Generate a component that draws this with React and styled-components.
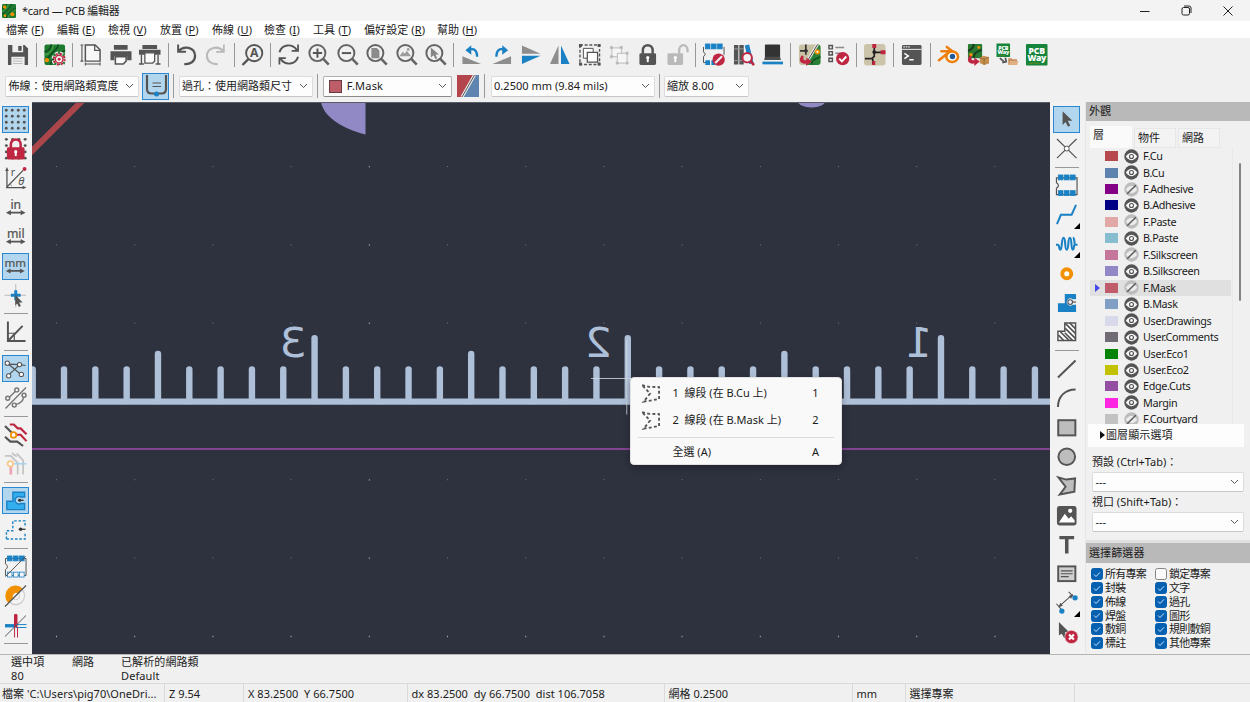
import React from "react";
import styled, { createGlobalStyle, css } from "styled-components";

const D = "#545454";
const B = "#1a81c4";
const R = "#bf2641";
const L = "#b9b9b9";
const O = "#f29100";

const Global = createGlobalStyle`
  * { box-sizing: border-box; }
  body {
    margin: 0;
    overflow: hidden;
    background: #f0f0f0;
    color: #1b1b1b;
    font-family: "Noto Sans", "Noto Sans CJK TC", sans-serif;
    font-size: 11px;
    line-height: 14px;
    letter-spacing: 0.1px;
    white-space: pre;
  }
`;

/* ---------- icon drawings, all on a 24 x 24 grid ---------- */

const lens = (c = "#646464") => (
  <>
    <circle cx="10.6" cy="10.3" r="8.2" fill="none" stroke={c} strokeWidth="2" />
    <path d="M16.6 16.3l5.6 5.8" stroke={c} strokeWidth="2.6" />
  </>
);
const padRow = (y, fill = B) =>
  [3.4, 9.6, 15.8].map((x) => (
    <rect key={x} x={x} y={y} width="4.8" height="5" fill={fill} stroke={B} strokeWidth="0.8" />
  ));
const hArrow = (y = 19) => (
  <path d={`M2 ${y}l5-2.6v1.7h10v-1.7l5 2.6l-5 2.6v-1.7h-10v1.7z`} fill={D} />
);
const unitLabel = (t, size = 12.5) => (
  <>
    <text x="12" y="13" textAnchor="middle" fontSize={size} fill={D} stroke={D} strokeWidth=".25" letterSpacing="0" fontFamily="Noto Sans">{t}</text>
    {hArrow(17)}
  </>
);
const dotGrid = (
  <g fill={D}>
    {[2.4, 8.8, 15.2, 21.6].flatMap((x) =>
      [2.4, 8.8, 15.2, 21.6].map((y) => <circle key={`${x}-${y}`} cx={x} cy={y} r="1.5" />)
    )}
  </g>
);
const board = (
  <>
    <rect x="1.5" y="1.5" width="21" height="21" rx="2" fill="#1d7a2f" />
    <path d="M1.5 9q6-1 7-7.5M1.500 17c5-1 6-5 9-8s5-3 5-7.500M8 22.500c0-7 4-5 6-9s5-3 8.500-6" fill="none" stroke="#0f4a20" strokeWidth="1.500" />
    <path d="M1.500 12.500c6-1 8-5 9.500-11M11 22c0-5 4-6 5-8s4-3 6.500-4" fill="none" stroke="#4fa548" strokeWidth="1.200" />
  </>
);
const pcbway = (x, y, s) => (
  <g transform={`translate(${x} ${y}) scale(${s})`}>
    <rect width="22" height="22" rx="1" fill="#16843a" />
    <text x="11" y="9.8" textAnchor="middle" fontSize="8.8" fontWeight="800" fill="#fff" letterSpacing="-0.2" fontFamily="Open Sans">PCB</text>
    <text x="11" y="17.8" textAnchor="middle" fontSize="8.8" fontWeight="800" fill="#fff" letterSpacing="-0.4" fontFamily="Open Sans">Way</text>
    <path d="M3 20.300q4-1.400 11-.6" stroke="#6a8a1f" fill="none" />
  </g>
);
const redHook = <path d="M4 12.500c-4.500 5 -1 9.500 4.500 8.500v2.500l5.500-4.700l-5.500-4v2.700c-2 .6-4-1-2.500-3.500z" fill={R} />;

const DRAWINGS = {
  save: (
    <>
      <path d="M2 2h17l3.500 3.500v17H2z" fill={D} />
      <path d="M6.500 2h11v7.500h-11zM5.500 14h13.500v8.500h-13.500z" fill="#f0f0f0" />
      <path d="M12.500 3h3.500v5h-3.500z" fill={D} />
      <path d="M7 16h10M7 18.500h10M7 21h10" stroke={L} strokeWidth="1" />
    </>
  ),
  boardSetup: (
    <>
      {board}
      <circle cx="4" cy="17.500" r="2.200" fill={O} />
      <circle cx="16.500" cy="16.500" r="6" fill="none" stroke="#e9e9e9" strokeWidth="3.600" strokeDasharray="3 1.712" />
      <circle cx="16.500" cy="16.500" r="5" fill="#e9e9e9" />
      <circle cx="16.500" cy="16.500" r="5.600" fill="none" stroke={R} strokeWidth="2" strokeDasharray="2.200 2.198" />
      <circle cx="16.500" cy="16.500" r="3.900" fill="#f3f3f3" stroke={R} strokeWidth="1.400" />
      <circle cx="16.500" cy="16.500" r="1.500" fill={R} />
    </>
  ),
  page: (
    <g fill="none" stroke={D}>
      <path d="M6.500 2h10l5 5v11.500h-15z" fill="#f7f7f7" strokeWidth="1.500" />
      <path d="M16 2v5.500h5.500" strokeWidth="1.300" />
      <path d="M3 2v16.500M1.500 2h3M1.500 18.500h3M6.500 21.500h15M6.500 20v3M21.500 20v3" strokeWidth="1.100" />
    </g>
  ),
  print: (
    <>
      <path d="M5 2h14v5H5zM1.500 8.500h21.500v9h-4.500v-4h-13v4H1.500z" fill={D} />
      <path d="M6.500 14v7.500h8l3-3V14z" fill="#fafafa" stroke={D} strokeWidth="1.600" />
    </>
  ),
  plot: (
    <>
      <path d="M1 7h22v5H1zM4.500 2h15v4h-15z" fill={D} />
      <path d="M7 10h10v8.500l-2 2H7z" fill="#fafafa" stroke={D} strokeWidth="1.300" />
      <path d="M3.500 12v9M20.500 12v9M1 21.500h5M18 21.500h5" stroke={D} strokeWidth="1.400" />
    </>
  ),
  undo: (
    <g fill="none" stroke={D} strokeWidth="2.300">
      <path d="M4 8C9 2.500 20 4 20.500 13c0 6-5 9-11 8.500" />
      <path d="M3.200 1.500v7.500h8" strokeWidth="2" />
    </g>
  ),
  redo: (
    <g fill="none" stroke={L} strokeWidth="2.100">
      <path d="M19.500 8C14.500 2.500 3.500 4 3 13c0 6 5 9 11 8.500" />
      <path d="M20.300 1.500v7.500h-8" strokeWidth="1.800" />
    </g>
  ),
  find: (
    <>
      <circle cx="13.500" cy="10.300" r="8.300" fill="none" stroke={D} strokeWidth="1.900" />
      <path d="M7.500 16.500l-6 6" stroke={D} strokeWidth="2.400" />
      <text x="13.500" y="14.800" textAnchor="middle" fontSize="12.500" fontWeight="700" fill={D} fontFamily="Noto Sans">A</text>
    </>
  ),
  refresh: (
    <g fill="none" stroke={D} strokeWidth="2">
      <path d="M2.500 9.500c2.500-8.500 13-9.500 18-2M21.500 14c-2.500 8.500-13 9.500-18 2" />
      <path d="M21.500 1.500v6.500h-6.500M2.500 22v-6.500h6.500" strokeWidth="1.800" />
    </g>
  ),
  zoomIn: <>{lens()}<path d="M6 10.300h9.400M10.700 5.600v9.400" stroke={D} strokeWidth="2" /></>,
  zoomOut: <>{lens()}<path d="M6 10.300h9.400" stroke={D} strokeWidth="2" /></>,
  zoomFit: <>{lens()}<path d="M6.500 5h5.500l2.700 2.700v7.800H6.500z" fill="#8b8b8b" /></>,
  zoomObjects: <>{lens()}<path d="M4.500 13.500l3.500-4.500 2 2 2-3 4.500 5.500z" fill="#9c9c9c" /><circle cx="13.500" cy="6.600" r="1.400" fill="#9c9c9c" /></>,
  zoomSelection: <>{lens()}<path d="M7 4.500l8.300 7.300h-3.500l1.700 3.700-1.900.9-1.800-3.800-2.800 2.200z" fill="#858585" /></>,
  rotateCcw: (
    <>
      <path d="M2.500 13.500v8h19z" fill="#8d8d8d" />
      <path d="M9 7c6-2 8.500 1 8.500 7" fill="none" stroke={B} strokeWidth="2.300" />
      <path d="M5.500 7.300l6-5v9.700z" fill={B} />
    </>
  ),
  rotateCw: (
    <>
      <path d="M21.500 13.500v8h-19z" fill="#8d8d8d" />
      <path d="M15 7c-6-2-8.500 1-8.500 7" fill="none" stroke={B} strokeWidth="2.300" />
      <path d="M18.500 7.300l-6-5v9.700z" fill={B} />
    </>
  ),
  flipV: <><path d="M3 2.500v8.500h19z" fill="#8d8d8d" /><path d="M3 21.500v-8.500h19z" fill={B} /></>,
  flipH: <><path d="M2 21.500h8.700v-19z" fill="#8d8d8d" /><path d="M22 21.500h-8.700v-19z" fill={B} /></>,
  group: (
    <>
      <rect x="2" y="2" width="20" height="20" fill="none" stroke={D} strokeWidth="1.400" strokeDasharray="3 1.800" />
      <path d="M1 1h3v3H1zM20 1h3v3h-3zM1 20h3v3H1zM20 20h3v3h-3z" fill={D} />
      <path d="M5.500 5.500h10v10h-10z" fill="#fdfdfd" stroke={D} />
      <path d="M9.500 9.500h10.500v10h-10.500z" fill="#fdfdfd" stroke={D} strokeWidth="1.300" />
    </>
  ),
  ungroup: (
    <g fill="#f5f5f5" stroke={L}>
      <path d="M5 5h10v9H5z" />
      <path d="M10.500 10.500h10v10h-10z" />
      <path d="M3.500 3.500h2v2h-2zM13.500 3.500h2v2h-2zM3.500 13h2v2h-2zM9.500 19.500h2v2h-2zM19.500 9.500h2v2h-2zM19.500 19.500h2v2h-2z" fill={L} />
    </g>
  ),
  lock: (
    <>
      <path d="M7 11V7.500c0-7 10-7 10 0V11" fill="none" stroke={D} strokeWidth="2.500" />
      <rect x="3.500" y="10.500" width="17" height="12" rx="1.500" fill={D} />
      <path d="M12 14.500v5" stroke="#fff" strokeWidth="2" /><circle cx="12" cy="14.800" r="1.600" fill="#fff" />
    </>
  ),
  unlock: (
    <>
      <path d="M13.500 11V7.500c0-7 8.500-7 8.500 0V9.500" fill="none" stroke={L} strokeWidth="2.300" />
      <rect x="1.500" y="10.500" width="16" height="12" rx="1.500" fill={L} />
      <path d="M9.500 14.500v5" stroke="#fff" strokeWidth="2" /><circle cx="9.500" cy="14.800" r="1.600" fill="#fff" />
    </>
  ),
  footprintEditor: (
    <>
      <path d="M1.500 4v5l2 2.500-2 2.500v6h4M22.500 4v8" fill="none" stroke={D} />
      {padRow(1)}
      <path d="M3.400 17.500h4.800v5h-4.800zM9.600 17.500h4v5h-4z" fill={B} />
      <circle cx="17" cy="17" r="6.300" fill={R} />
      <path d="M13.500 20.500l7-7" stroke="#eee" strokeWidth="2.200" />
    </>
  ),
  library: (
    <>
      <path d="M2 2h4.500v20H2zM7.500 2h4.500v20H7.500z" fill={D} />
      <path d="M2 6h10M2 18h10" stroke="#999" />
      <path d="M13 2.500l4.500-1 4.500 19-4.500 1z" fill={B} />
      <circle cx="15.500" cy="15" r="4.800" fill="#f3f3f3" stroke={R} strokeWidth="2" />
      <path d="M18.500 18l4 4.500" stroke={R} strokeWidth="2.600" />
    </>
  ),
  viewer3d: (
    <>
      <rect x="4" y="1.500" width="15.500" height="13.500" rx="1" fill="#333" />
      <path d="M4 14h15.500l.8 3.300H3.200z" fill="#4c4c4c" />
      <path d="M1.500 19h21v2.800h-21z" fill={B} />
    </>
  ),
  updatePcb: (
    <>
      <rect x="1" y="1.500" width="22" height="21" rx="3" fill="#c9c1a4" />
      <path d="M23 4v15.500q0 3-3 3H8L20 1.500q3 0 3 2.500z" fill="#2a8037" />
      <path d="M14 22c0-5 3-5 9-8" stroke="#0f5120" strokeWidth="1.500" fill="none" />
      <path d="M8 1.500v6M2 8h8M8 8v4" stroke="#333" strokeWidth="1.700" fill="none" /><circle cx="8" cy="8" r="1.800" fill="#333" />
      <path d="M20 1.500L8 21" stroke="#eee" strokeWidth="2.800" /><path d="M20 1.500L8 21" stroke="#444" strokeWidth="1" />
      <circle cx="19.800" cy="9" r="2.700" fill={O} /><circle cx="19.800" cy="9" r="1" fill="#fff" />
      {redHook}
    </>
  ),
  drc: (
    <>
      <g fill="none" stroke={D} strokeWidth="1.500"><path d="M2 2.500h3.500V6H2zM2 8.800h3.500v3.500H2zM2 15.500h3.500v3.500H2z" /><path d="M8.500 4.500h9M8.500 10.500h5" stroke="#8b8b8b" /></g>
      <circle cx="16" cy="16" r="6.800" fill={R} />
      <path d="M12.500 16l2.700 2.800 4.500-5" fill="none" stroke="#fff" strokeWidth="2" />
    </>
  ),
  schematic: (
    <>
      <rect x="1" y="1" width="22" height="22" rx="3" fill="#cbc3aa" />
      <path d="M11.500 2v7.500M11.500 9.500h8M11.500 9.500v5M2 16h7l3-3M10 16v6" stroke="#222" strokeWidth="1.700" fill="none" />
      <path d="M9.500 1h4v4h-4zM18 7.500h5v4h-5zM9.500 18.500h3v4h-3z" fill={R} />
      <circle cx="11.500" cy="9.300" r="2" fill="#222" />
    </>
  ),
  console: (
    <>
      <rect x="2" y="2" width="20" height="20.500" rx="1.500" fill={D} />
      <path d="M2 6.500h20" stroke="#eee" /><path d="M3.500 4h7" stroke="#eee" strokeWidth="1.300" strokeDasharray="1.500 1" />
      <path d="M4.500 10.500l4 2.700-4 2.700M9.500 17h4.500" fill="none" stroke="#fff" strokeWidth="1.500" />
    </>
  ),
  blender: (
    <>
      <path d="M2 17.500L13.500 8.500H4.500M10 4l8.500 6.500" fill="none" stroke="#ee7f0c" strokeWidth="2.600" strokeLinecap="round" />
      <ellipse cx="15.500" cy="14" rx="6" ry="5.300" fill="#fff" stroke="#ee7f0c" strokeWidth="2.600" />
      <circle cx="15.800" cy="13.800" r="2.800" fill="#22579c" />
    </>
  ),
  exportBox: (
    <>
      <rect x="2" y="1" width="14.500" height="14.500" rx="1" fill="#2a7a34" /><path d="M2 8q5-1 6-7M8 15c0-6 4-6 8-8" stroke="#173f1d" strokeWidth="2" fill="none" />
      <circle cx="5" cy="12" r="1.800" fill={O} /><circle cx="13" cy="4.500" r="1.500" fill={O} />
      {redHook}
      <path d="M14 15l4-2 5.500 1.500v6.500l-5 1.500-4.500-2z" fill="#c58f4f" /><path d="M14 15l4.500 1.500 5-2M18.500 16.500v6" stroke="#8f5f2c" fill="none" strokeWidth=".8" />
    </>
  ),
  pcbwayFolder: (
    <>
      {pcbway(1.5, 0.5, 0.63)}
      <path d="M5 15.500l4 3.500M7.500 20l4-1-1-4" stroke="#555" strokeWidth="1.800" fill="none" />
      <path d="M13.500 15.500h3.500l1 1.200h4.500V22.500h-9z" fill="#c99160" /><path d="M14 22.500l1.500-4H24l-1.500 4z" fill="#e0b083" />
    </>
  ),
  pcbway: pcbway(1, 1, 1),

  gridDots: dotGrid,
  gridLock: (
    <>
      {dotGrid}
      <path d="M7 12V7.500c0-6.500 10-6.500 10 0V12" fill="#f0f0f0" stroke={R} strokeWidth="2.600" />
      <rect x="3" y="10.500" width="18" height="12.500" rx="1.500" fill={R} />
      <path d="M12 15v4.500" stroke="#fff" strokeWidth="2" /><circle cx="12" cy="15" r="1.600" fill="#fff" />
    </>
  ),
  polar: (
    <>
      <path d="M3 22V3.500M2 22h18M3 21.500L19.500 4.500" stroke={D} strokeWidth="1.300" fill="none" />
      <path d="M3 1l1.800 4H1.200zM23 22l-4 1.800v-3.600zM8 21.500q0-3-2-4" fill={D} />
      <circle cx="21" cy="3" r="2" fill={R} />
      <text x="7" y="10.500" fontSize="11" fill={D} fontFamily="Noto Sans">r</text>
      <text x="14.500" y="19.500" fontSize="11.500" fontStyle="italic" fill={D} fontFamily="Noto Sans">θ</text>
    </>
  ),
  inch: unitLabel("in"),
  mil: unitLabel("mil"),
  mm: unitLabel("mm", 12.3),
  cursorShape: (
    <>
      <path d="M12 0v24M.5 11.500h22" stroke="#aaa" strokeWidth=".8" />
      <path d="M12 6.500v10M7 11.500h10" stroke={B} strokeWidth="3" />
      <path d="M11.500 11l7.500 8h-3.500l1.700 3.500-2 1-1.700-3.500-2 2z" fill={D} />
    </>
  ),
  angle: (
    <g fill="none" stroke={D} strokeWidth="2">
      <path d="M4 1.500v20h18M4 21.500L19 6" /><path d="M4 13.500h6.500v8" strokeWidth="1.200" />
    </g>
  ),
  ratsnest: (
    <>
      <path d="M4.500 6.500l13 10.500M17 7L5 18M4.500 6.500L17 7l6 1" stroke={D} strokeWidth="1.300" fill="none" />
      {[[3.5, 5.5], [16.5, 7], [5, 19], [18.5, 17.5]].map(([x, y]) => <circle key={x} cx={x} cy={y} r="2.300" fill="#fff" stroke={D} strokeWidth="1.100" />)}
    </>
  ),
  curvedRats: (
    <g fill="#f6f6f6" stroke="#777" strokeWidth="1.500">
      <path d="M1.500 23L22.500 1.500M5 12l8-8M11 19q9-1 9-9" fill="none" strokeWidth="1.400" />
      <circle cx="3.800" cy="12.500" r="2" /><circle cx="13" cy="4" r="2" /><circle cx="10.500" cy="19.500" r="2" /><circle cx="20.500" cy="9.500" r="2" />
    </g>
  ),
  highContrast: (
    <>
      <path d="M1 3l7.500 7.500M1 14l5.500 5h7l6 4.500" fill="none" stroke={D} strokeWidth="2.200" />
      <path d="M6 1.500h4l4 4h3l6 6M12 12h5l6 6.500" fill="none" stroke={R} strokeWidth="2.200" />
      <circle cx="9.800" cy="12.200" r="2.800" fill="#fff" stroke={O} strokeWidth="1.800" />
    </>
  ),
  netHighlight: (
    <>
      <path d="M1 4h6l7 7v12M8 1l5 3.500M13 1.500l6.500 7V23" fill="none" stroke="#c4c4c4" strokeWidth="1.800" />
      <path d="M7 13v10" stroke="#eba6b2" strokeWidth="2.800" /><path d="M9 12h14" stroke="#a8d2ee" strokeWidth="1.600" />
      <circle cx="6.500" cy="12" r="2.800" fill="#fff" stroke="#f4c78b" strokeWidth="1.800" />
    </>
  ),
  zoneFill: (
    <>
      <path d="M3 22V13h6.500V3.500H22v5h-4.300a4 4 0 1 0 0 7H22V22z" fill="#35aef0" stroke={B} strokeWidth="1.500" />
      <path d="M15 12h6" stroke="#333" strokeWidth="1.300" /><circle cx="16.800" cy="12" r="1.700" fill="#333" />
    </>
  ),
  zoneOutline: (
    <>
      <path d="M2.500 21.500V13H9V3h12.500v5.500M21.500 16v5.500h-19" fill="none" stroke={B} strokeWidth="1.400" strokeDasharray="2.600 1.800" />
      <path d="M15 11.500h7" stroke="#333" strokeWidth="1.300" /><circle cx="17" cy="11.500" r="1.700" fill="#333" />
    </>
  ),
  padSketch: (
    <>
      <path d="M1.500 3.500v5.500q4 3 0 6v6h21V3.500z" fill="none" stroke={D} />
      {padRow(1)}{padRow(17.5, "#f5f5f5")}
      <path d="M1.500 22L22 1.500" stroke={D} />
    </>
  ),
  viaSketch: (
    <>
      <circle cx="12" cy="12" r="9" fill="#f4f4f4" stroke="#ccc" strokeWidth="1.200" />
      <circle cx="12" cy="12" r="4" fill="none" stroke="#ccc" />
      <path d="M4.500 19.500A10 10 0 1 1 19 4.500l-4.500 5a4 4 0 0 0-5.500 5z" fill={O} />
      <path d="M1 23L22.500 1.500" stroke={D} strokeWidth="1.200" />
    </>
  ),
  trackSketch: (
    <>
      <path d="M1 12h11" stroke={B} strokeWidth="3.400" /><path d="M12 1.500v10.500" stroke={R} strokeWidth="3.600" strokeLinecap="round" />
      <path d="M12 10.800h11M12 13.800h11" stroke={B} /><path d="M10.800 13v11M13.800 13v11" stroke={R} />
      <path d="M1 23L22.500 1.500" stroke={D} />
    </>
  ),

  arrow: <path d="M7 3.500l10.500 10.200h-5l2.700 5-2.400 1.200-2.600-5L7 18z" fill={D} />,
  localRats: (
    <>
      <path d="M2 2l20 19.500M22 2L2 21.500" stroke={D} strokeWidth="1.200" />
      <circle cx="12" cy="11.800" r="2.500" fill="#fff" stroke={D} />
    </>
  ),
  footprint: (
    <>
      <path d="M1.500 4v5q4 2.500 0 5.500v6.500h21V4z" fill="none" stroke={D} strokeWidth="1.200" />
      {padRow(1)}{padRow(17)}
    </>
  ),
  route: <><path d="M2 21.500l4-9.500h11l4.500-10" fill="none" stroke={B} strokeWidth="2" /></>,
  tune: <path d="M1 13h1.800c2 0 1 5 2.800 5s.8-12 3.200-12s.8 12 3.200 12s.8-12 3.200-12s.8 12 3 12c1.800 0 .3-5 2.300-5h2.500M18.200 6c2.300 0 1.300 7 2.300 7" fill="none" stroke={B} strokeWidth="2.100" />,
  via: <circle cx="12" cy="12" r="4.600" fill="#fff" stroke={O} strokeWidth="4" />,
  zone: (
    <>
      <path d="M3 21.500V12.500h7V3H21.500v5.500h-3.500a3.600 3.600 0 1 0 0 5.600h3.500v7.400z" fill={B} />
      <circle cx="15.500" cy="11.300" r="2.400" fill="#eef" stroke={D} strokeWidth="1.100" /><path d="M17.500 11.300h4" stroke={D} strokeWidth="1.200" />
    </>
  ),
  ruleArea: (
    <>
      <path d="M3 21V11.500h7V3h11v18z" fill="#fff" stroke={D} strokeWidth="1.500" />
      <path d="M10.500 3.500L21 14M10.500 8.500L21 19M15 3L21 9M10 13l8 8M5.500 12l9 9M3.500 15.500L9 21" stroke={D} strokeWidth="1.700" />
    </>
  ),
  line: <path d="M3 21L21 3.500" stroke={D} strokeWidth="2" />,
  arc: <path d="M3 21.500C3 11 10 3.500 21 3.500" fill="none" stroke={D} strokeWidth="2" />,
  rect: <rect x="3.300" y="4.300" width="17.500" height="15.500" fill="#bdbdbd" stroke={D} strokeWidth="2" />,
  circle: <circle cx="12" cy="12" r="8.500" fill="#bdbdbd" stroke={D} strokeWidth="2" />,
  polygon: <path d="M3.500 3.500l8 2.200 9-1.200-.7 13.500-15 3 6-8z" fill="#bdbdbd" stroke={D} strokeWidth="2" />,
  image: (
    <>
      <rect x="2" y="2" width="20" height="20" rx="2.500" fill={D} />
      <path d="M4 19l6-9 4 5 2.500-2.500 3.500 4V19z" fill="#fff" /><circle cx="15.500" cy="7" r="2.200" fill="#fff" />
    </>
  ),
  text: <path d="M4.500 3h15v3.500h-5.700V21h-3.600V6.500H4.500z" fill={D} />,
  textbox: (
    <>
      <rect x="3.300" y="4.500" width="17.500" height="15" fill="#cfcfcf" stroke={D} strokeWidth="2" />
      <path d="M6 9h12M6 12h12M6 15h8" stroke={D} strokeWidth="1.200" />
    </>
  ),
  dimension: (
    <>
      <path d="M4 16L18 3.500M1.500 13l6 7M14 1l7 7" stroke={D} strokeWidth="1.100" fill="none" />
      <path d="M3.500 16.500l2-4.500 2.500 3zM18.500 3.500l-4.500 1.500 2.500 3z" fill={D} />
      <circle cx="7" cy="20.500" r="2.700" fill={B} /><circle cx="20.500" cy="7" r="2.700" fill={B} />
    </>
  ),
  deleteTool: (
    <>
      <path d="M4 1l10.500 10.500h-4.500l2 5-2.500 1-2.500-4.500L4 14.500z" fill={D} />
      <circle cx="16.800" cy="16.300" r="6.800" fill={R} stroke="#f0f0f0" strokeWidth=".6" />
      <path d="M14.300 13.800l5 5M19.300 13.800l-5 5" stroke="#fff" strokeWidth="2.200" />
    </>
  ),
  trackWidth: (
    <>
      <path d="M3 1v14q0 4.500 4.500 4.500h10q4.500 0 4.500-4.500V1" fill="none" stroke={D} strokeWidth="2.200" />
      <path d="M8.500 9h8.500M8.500 12.500h8.500" stroke={D} strokeWidth="1.100" />
      <circle cx="12.500" cy="20" r="2.500" fill={B} />
    </>
  ),
  segment: (
    <path d="M2.300 3.500l7.700 1.800 10.800.2v13l-16.800 3 7-9z" fill="none" stroke={D} strokeWidth="2" strokeDasharray="3.200 2.500" />
  ),
  appIcon: (
    <>
      {board}
      <circle cx="5.500" cy="6" r="2.500" fill={O} /><circle cx="17" cy="17" r="3" fill={O} /><circle cx="6" cy="19" r="2" fill={O} />
    </>
  ),
};

const Svg = styled.svg`
  display: block;
  flex: none;
  overflow: visible;
  width: ${(p) => p.$size}px;
  height: ${(p) => p.$size}px;
`;
const Icon = ({ name, size = 24 }) => (
  <Svg viewBox="0 0 24 24" $size={size}>{DRAWINGS[name]}</Svg>
);

/* ---------- window frame ---------- */

const Window = styled.div`
  display: flex;
  flex-direction: column;
  width: 1250px;
  height: 702px;
  background: #f0f0f0;
`;
const TitleBar = styled.header`
  display: flex;
  align-items: center;
  height: 21px;
  padding-left: 1px;
  gap: 5px;
  background: #f3f3f3;
`;
const Title = styled.span`
  flex: 1;
  letter-spacing: -0.3px;
`;
const WindowButtons = styled.div`
  display: flex;
  align-items: center;
  height: 18px;
  padding-right: 1px;
`;
const WindowButton = styled.div`
  display: flex;
  justify-content: center;
  width: 41.5px;
`;
const MenuBar = styled.nav`
  display: grid;
  grid-template-columns: 51px 51px 52px 52px 52px 49px 51px 73px auto;
  align-items: center;
  height: 17px;
  padding-left: 6px;
  background: #fff;
`;

/* ---------- toolbars ---------- */

const TopToolbar = styled.div`
  display: flex;
  align-items: center;
  height: 33px;
  padding-left: 3.2px;
`;
const OptionsBar = styled.div`
  display: flex;
  align-items: center;
  height: 31px;
  padding: 0 0 1px 5px;
`;
const SideToolbar = styled.div`
  display: flex;
  flex-direction: column;
  align-items: center;
  flex: none;
  width: ${(p) => p.$width}px;
  padding-top: 3px;
  padding-right: ${(p) => p.$padRight}px;
  background: #f2f2f2;
`;
const ToolCell = styled.div`
  position: relative;
  display: flex;
  align-items: center;
  justify-content: center;
  flex: none;
  width: 29.3px;
  height: 29.3px;
`;
const ToolButton = styled.div`
  display: flex;
  align-items: center;
  justify-content: center;
  width: 27px;
  height: 27px;
  ${(p) => p.$on && css`
    background: #b3d6ef;
    border: 1px solid #2b88d0;
  `}
`;
const MoreMark = styled.i`
  position: absolute;
  right: 1px;
  bottom: 1px;
  border: 3px solid #000;
  border-top-color: transparent;
  border-left-color: transparent;
`;
const Separator = styled.i`
  flex: none;
  background: #989898;
  ${(p) => (p.$vertical
    ? css`width: 1px; height: 24px; margin: 0 ${p.$gap || 3.2}px;`
    : css`height: 1px; width: 24px; margin: 3.2px 0;`)}
`;

const Tools = ({ items, active = [], more = [], vertical }) =>
  items.map((name, i) =>
    name === "|" ? (
      <Separator key={i} $vertical={!vertical} />
    ) : (
      <ToolCell key={i}>
        <ToolButton $on={active.includes(name)}><Icon name={name} size={active.includes(name) ? 22.5 : 23.5} /></ToolButton>
        {more.includes(name) && <MoreMark />}
      </ToolCell>
    )
  );

const ComboBox = styled.div`
  display: flex;
  align-items: center;
  flex: none;
  width: ${(p) => p.$width}px;
  height: ${(p) => p.$height || 21}px;
  padding: 0 4px 0 2.5px;
  background: #fdfdfd;
  border: 1px solid ${(p) => (p.$strong ? "#b0b0b0" : "#dcdcdc")};
  border-bottom-color: ${(p) => (p.$strong ? "#888" : "#c6c6c6")};
  border-radius: 2px;
  letter-spacing: ${(p) => p.$track || 0}px;
`;
const ComboText = styled.span`
  flex: 1;
`;
const Swatch = styled.i`
  flex: none;
  width: 13px;
  height: 13px;
  margin: 0 5px 0 2px;
  background: #bc5d68;
  border: 1px solid #6b3b43;
`;
const Chevron = () => (
  <svg width="9" height="6" viewBox="0 0 9 6"><path d="M1 1l3.500 3.500L8 1" fill="none" stroke="#555" /></svg>
);
const Combo = ({ children, swatch, ...rest }) => (
  <ComboBox {...rest}>
    {swatch && <Swatch />}
    <ComboText>{children}</ComboText>
    <Chevron />
  </ComboBox>
);
const Gap = styled.i`
  flex: none;
  width: ${(p) => p.$w}px;
`;
const LayerPair = styled.svg`
  display: block;
  width: 22px;
  height: 22px;
`;

const FILE_TOOLS = [
  "save", "|", "boardSetup", "|", "page", "print", "plot", "|", "undo", "redo", "|", "find", "|",
  "refresh", "zoomIn", "zoomOut", "zoomFit", "zoomObjects", "zoomSelection", "|",
  "rotateCcw", "rotateCw", "flipV", "flipH", "group", "ungroup", "lock", "unlock", "|",
  "footprintEditor", "library", "viewer3d", "|", "updatePcb", "drc", "|", "schematic", "|", "console", "|",
  "blender", "exportBox", "pcbwayFolder", "pcbway",
];
const LEFT_TOOLS = [
  "gridDots", "gridLock", "polar", "inch", "mil", "mm", "cursorShape", "|", "angle", "|",
  "ratsnest", "curvedRats", "|", "highContrast", "netHighlight", "|", "zoneFill", "zoneOutline", "|",
  "padSketch", "viaSketch", "trackSketch", "|",
];
const RIGHT_TOOLS = [
  "arrow", "localRats", "|", "footprint", "route", "tune", "via", "zone", "ruleArea", "|",
  "line", "arc", "rect", "circle", "polygon", "image", "text", "textbox", "dimension", "deleteTool",
];
const MENUS = [
  ["檔案", "F"], ["編輯", "E"], ["檢視", "V"], ["放置", "P"], ["佈線", "U"],
  ["檢查", "I"], ["工具", "T"], ["偏好設定", "R"], ["幫助", "H"],
];

/* ---------- board canvas ---------- */

const Workspace = styled.main`
  display: flex;
  height: 552px;
`;
const CanvasArea = styled.section`
  position: relative;
  flex: none;
  width: 1018px;
  height: 552px;
  background: #2e323f;
  border-top: 1px solid #5b5d66;
`;
const Drawing = styled.svg`
  display: block;
  width: 1018px;
  height: 551px;
`;

const range = (n) => Array.from({ length: n }, (_, i) => i);

const Ruler = () => (
  <g stroke="#aebfd8" strokeWidth="6.4" strokeLinecap="round">
    <path d="M20 401.600H1060" />
    {range(33).map((i) => {
      const x = 32.7 + i * 31.32;
      const step = (i + 1) % 10;
      const top = step === 0 ? 338.3 : step === 5 ? 354 : 369.5;
      return <path key={i} d={`M${x} ${top}V401`} />;
    })}
  </g>
);
const RulerNumber = ({ x, children }) => (
  <text
    transform={`translate(${x} 357) scale(-1.04 1)`}
    textAnchor="middle"
    fontFamily="DejaVu Sans"
    fontSize="41"
    letterSpacing="0"
    fill="#aebfd8"
  >
    {children}
  </text>
);
const Board = () => (
  <Drawing viewBox="32 103 1018 551">
    <path d="M26 157L86 97" stroke="#ad464b" strokeWidth="6" />
    <path d="M321 102C324 118 344 129 365.500 134.500V102z" fill="#9189c6" />
    <ellipse cx="811.500" cy="100.500" rx="14" ry="7" fill="#9189c6" />
    <g>
      {range(13).flatMap((c) =>
        range(7).map((r) => {
          const bright = c === 4 || r === 6;
          return (
            <rect
              key={`${c}-${r}`}
              x={56 + c * 78.2}
              y={166 + r * 78.3}
              width="1"
              height={bright ? 1.4 : 1}
              fill={bright ? "#aaadb5" : "#747883"}
            />
          );
        })
      )}
    </g>
    <path d="M32 449H1050" stroke="#84448f" strokeWidth="2" />
    <Ruler />
    <RulerNumber x={293.3}>3</RulerNumber>
    <RulerNumber x={598.3}>2</RulerNumber>
    <RulerNumber x={918.8}>1</RulerNumber>
    <path d="M591 378.500H632M626.800 340V414.500" stroke="#d5dbe3" strokeWidth=".8" />
  </Drawing>
);

const ContextMenu = styled.div`
  position: absolute;
  left: 598px;
  top: 273.5px;
  width: 212px;
  height: 88.5px;
  padding-top: 2px;
  background: #f9f9f9;
  border: 1px solid #e2e2e2;
  border-radius: 4px;
  box-shadow: 0 3px 7px rgba(0, 0, 0, 0.3);
`;
const ContextRow = styled.div`
  display: grid;
  grid-template-columns: 23px 141px 1fr;
  align-items: center;
  height: 27.3px;
  padding-left: 8.5px;
  letter-spacing: 0;
`;
const MenuIconSlot = styled.span`
  display: block;
`;
const RowLabel = styled.span`
  padding-left: 10px;
  grid-column: 2;
`;
const Shortcut = styled.span`
  width: 12px;
  text-align: center;
  padding-left: 4px;
  grid-column: 3;
  margin-left: 4px;
`;
const MenuRule = styled.hr`
  height: 1px;
  margin: 3px 7px 0;
  border: 0;
  background: #d9d9d9;
`;

/* ---------- appearance panel ---------- */

const SidePanel = styled.aside`
  display: flex;
  flex-direction: column;
  flex: 1;
  border-left: 1px solid #e6e6e6;
`;
const PanelHeader = styled.div`
  display: flex;
  align-items: center;
  flex: none;
  height: ${(p) => p.$height}px;
  padding: 0 0 1px 3px;
  background: #b9b9b9;
`;
const Tabs = styled.div`
  display: flex;
  flex: none;
  align-items: flex-end;
  height: 27px;
  padding-left: 4px;
  gap: 2px;
`;
const Tab = styled.div`
  width: 42px;
  height: ${(p) => (p.$on ? 22 : 20)}px;
  padding: ${(p) => (p.$on ? "1px 0 0 2px" : "2px 0 0 3px")};
  background: ${(p) => (p.$on ? "#fafafa" : "#f3f3f3")};
  border: 1px solid ${(p) => (p.$on ? "#fafafa" : "#e7e7e7")};
`;
const LayerArea = styled.div`
  display: flex;
  flex: none;
  height: 276px;
  margin-left: 4px;
  padding-top: 0.4px;
  overflow: hidden;
`;
const LayerList = styled.div`
  width: 141px;
`;
const LayerRow = styled.div`
  display: grid;
  grid-template-columns: 15px 19px 16px 1fr;
  align-items: center;
  height: 16.46px;
  background: ${(p) => (p.$on ? "#e0e0e0" : "transparent")};
`;
const LayerColor = styled.i`
  width: 13px;
  height: 10px;
  background: ${(p) => p.$color};
`;
const LayerName = styled.span`
  padding-left: 3px;
  font-size: 10.8px;
  line-height: 14px;
  letter-spacing: -0.33px;
`;
const MarkSlot = styled.span`
  display: flex;
  align-items: center;
  padding-left: 5px;
`;
const ActiveMark = styled.i`
  border: 4px solid transparent;
  border-left: 5px solid #4646f0;
  border-right: 0;
`;
const ScrollTrack = styled.div`
  width: 14px;
  margin-left: 1px;
  padding: 15px 0 0 6px;
  border-left: 1px solid #e9e9e9;
`;
const ScrollThumb = styled.div`
  width: 2px;
  height: 138px;
  border-radius: 1px;
  background: #858585;
`;
const Eye = ({ open }) => (
  <svg width="15" height="15" viewBox="0 0 15 15">
    {open ? (
      <>
        <circle cx="7.500" cy="7.500" r="7.200" fill="#545454" />
        <path d="M1.800 7.500q5.700-7.500 11.400 0q-5.700 7.500-11.400 0z" fill="#f5f5f5" />
        <circle cx="7.500" cy="7.500" r="2" fill="none" stroke="#545454" strokeWidth="1.100" />
      </>
    ) : (
      <>
        <circle cx="7.500" cy="7.500" r="7.200" fill="#bdbdbd" />
        <path d="M1.800 7.500q5.700-7.500 11.400 0q-5.700 7.500-11.400 0z" fill="#ececec" />
        <path d="M3.200 11.800L11.800 3.200" stroke="#5c5c5c" strokeWidth="1.500" />
      </>
    )}
  </svg>
);
const Disclosure = styled.div`
  display: flex;
  flex: none;
  align-items: center;
  gap: 1px;
  height: 23px;
  margin: 0 6px 0 2px;
  padding: 0 0 1px 12px;
  background: #fdfdfd;
`;
const Triangle = styled.i`
  border: 4px solid transparent;
  border-left: 5px solid #111;
  border-right: 0;
`;
const PresetBlock = styled.div`
  display: flex;
  flex: none;
  flex-direction: column;
  height: 96.5px;
  padding: 8.5px 0 0 6px;
  border-bottom: 3px solid #e0e0e0;
`;
const PresetLabel = styled.label`
  height: ${(p) => p.$height}px;
  padding-top: ${(p) => p.$top || 0}px;
  letter-spacing: 0;
`;
const FilterGrid = styled.div`
  display: grid;
  grid-template-columns: 64px 1fr;
  grid-auto-rows: 13.8px;
  padding: 4.3px 0 0 4.6px;
  align-items: center;
  letter-spacing: -0.75px;
`;
const Filter = styled.label`
  display: flex;
  align-items: center;
  gap: 2.5px;
`;
const CheckBox = styled.span`
  display: flex;
  align-items: center;
  justify-content: center;
  width: 12px;
  height: 12px;
  border-radius: 2.5px;
  background: ${(p) => (p.$on ? "#0560b2" : "#fafafa")};
  border: 1px solid ${(p) => (p.$on ? "#0560b2" : "#848484")};
`;
const Check = () => (
  <svg width="8" height="7" viewBox="0 0 8 7"><path d="M1 3.500l2 2L7 1.300" fill="none" stroke="#cfe4f5" /></svg>
);

const LAYERS = [
  ["F.Cu", "#b7484e", 1], ["B.Cu", "#5d82ad", 1], ["F.Adhesive", "#840084", 0], ["B.Adhesive", "#000084", 1],
  ["F.Paste", "#e2a8a5", 0], ["B.Paste", "#86bed0", 1], ["F.Silkscreen", "#c4769b", 0], ["B.Silkscreen", "#9287c7", 1],
  ["F.Mask", "#bf5d6b", 0], ["B.Mask", "#7f9fc4", 1], ["User.Drawings", "#d8d9ea", 1], ["User.Comments", "#716b76", 1],
  ["User.Eco1", "#048404", 1], ["User.Eco2", "#c2c200", 1], ["Edge.Cuts", "#954fa2", 1], ["Margin", "#ff26e2", 1],
  ["F.Courtyard", "#c2c2c2", 0],
];
const FILTERS = [
  ["所有專案", 1], ["鎖定專案", 0], ["封裝", 1], ["文字", 1], ["佈線", 1], ["過孔", 1],
  ["焊盤", 1], ["圖形", 1], ["敷銅", 1], ["規則敷銅", 1], ["標註", 1], ["其他專案", 1],
];

/* ---------- bottom bars ---------- */

const InfoBar = styled.div`
  display: grid;
  grid-template-columns: 61px 49px auto;
  height: 29px;
  padding: 0 0 0 11px;
  border-top: 1px solid #b5b5b5;
  line-height: 13.5px;
`;
const StatusBar = styled.footer`
  display: grid;
  grid-template-columns: 165px 79px 163.5px 257px 188px 53px 169px 1fr;
  height: 19px;
  border-top: 1px solid #d8d8d8;
`;
const StatusField = styled.div`
  padding: 3px 0 0 ${(p) => (p.$first ? 2 : 4)}px;
  border-right: 1px solid #dadada;
  letter-spacing: 0.03px;
`;

export default function App() {
  return (
    <Window>
      <Global />
      <TitleBar>
        <Icon name="appIcon" size={16} />
        <Title>*card — PCB 編輯器</Title>
        <WindowButtons>
          <WindowButton><svg width="10" height="10"><path d="M0 5.500h9.500" stroke="#222" /></svg></WindowButton>
          <WindowButton>
            <svg width="11" height="11" fill="none" stroke="#222"><rect x="1" y="2.500" width="7.500" height="7.500" rx="1.500" /><path d="M3 1h5q2 0 2 2v5" /></svg>
          </WindowButton>
          <WindowButton><svg width="10" height="10"><path d="M.5 .5l9 9M9.500 .5l-9 9" stroke="#222" /></svg></WindowButton>
        </WindowButtons>
      </TitleBar>
      <MenuBar>
        {MENUS.map(([label, key]) => <span key={key}>{label} (<u>{key}</u>)</span>)}
      </MenuBar>
      <TopToolbar><Tools items={FILE_TOOLS} /></TopToolbar>
      <OptionsBar>
        <Combo $width={134}>佈線：使用網路類寬度</Combo>
        <Gap $w={3} />
        <ToolButton $on><Icon name="trackWidth" size={24} /></ToolButton>
        <Separator $vertical $gap={4.3} />
        <Combo $width={134}>過孔：使用網路類尺寸</Combo>
        <Separator $vertical $gap={4.8} />
        <Combo $width={129} $strong swatch $track={0.2}>F.Mask</Combo>
        <Gap $w={5} />
        <LayerPair viewBox="0 0 22 22">
          <path d="M0 0h22v22H0z" fill="#b5454c" /><path d="M18 0h4v22H5z" fill="#5f84b0" />
          <path d="M17.500 0L5 22" stroke="#eee" strokeWidth="3" /><path d="M17.500 0L5 22" stroke="#555" strokeWidth="1" />
        </LayerPair>
        <Separator $vertical $gap={5.2} />
        <Combo $width={164} $track={0.02}>0.2500 mm (9.84 mils)</Combo>
        <Separator $vertical $gap={4} />
        <Combo $width={85}>縮放 8.00</Combo>
      </OptionsBar>
      <Workspace>
        <SideToolbar $width={32} $padRight={1}>
          <Tools vertical items={LEFT_TOOLS} active={["gridDots", "mm", "ratsnest", "zoneFill"]} />
        </SideToolbar>
        <CanvasArea>
          <Board />
          <ContextMenu>
            <ContextRow><MenuIconSlot><Icon name="segment" size={22} /></MenuIconSlot><RowLabel>1  線段 (在 B.Cu 上)</RowLabel><Shortcut>1</Shortcut></ContextRow>
            <ContextRow><MenuIconSlot><Icon name="segment" size={22} /></MenuIconSlot><RowLabel>2  線段 (在 B.Mask 上)</RowLabel><Shortcut>2</Shortcut></ContextRow>
            <MenuRule />
            <ContextRow><RowLabel>全選 (A)</RowLabel><Shortcut>A</Shortcut></ContextRow>
          </ContextMenu>
        </CanvasArea>
        <SideToolbar $width={35} $padRight={1.4}>
          <Tools vertical items={RIGHT_TOOLS} active={["arrow"]} more={["route", "tune", "dimension"]} />
        </SideToolbar>
        <SidePanel>
          <PanelHeader $height={18.5}>外觀</PanelHeader>
          <Tabs><Tab $on>層</Tab><Tab>物件</Tab><Tab>網路</Tab></Tabs>
          <LayerArea>
            <LayerList>
              {LAYERS.map(([name, color, shown]) => (
                <LayerRow key={name} $on={name === "F.Mask"}>
                  <MarkSlot>{name === "F.Mask" && <ActiveMark />}</MarkSlot>
                  <LayerColor $color={color} />
                  <Eye open={shown} />
                  <LayerName>{name}</LayerName>
                </LayerRow>
              ))}
            </LayerList>
            <ScrollTrack><ScrollThumb /></ScrollTrack>
          </LayerArea>
          <Disclosure><Triangle />圖層顯示選項</Disclosure>
          <PresetBlock>
            <PresetLabel $height={17}>預設 (Ctrl+Tab)：</PresetLabel>
            <Combo $width={152} $height={20}>---</Combo>
            <PresetLabel $height={20} $top={3}>視口 (Shift+Tab)：</PresetLabel>
            <Combo $width={152} $height={20}>---</Combo>
          </PresetBlock>
          <PanelHeader $height={20}>選擇篩選器</PanelHeader>
          <FilterGrid>
            {FILTERS.map(([label, on]) => (
              <Filter key={label}><CheckBox $on={on}>{on ? <Check /> : null}</CheckBox>{label}</Filter>
            ))}
          </FilterGrid>
        </SidePanel>
      </Workspace>
      <InfoBar>
        <div>選中項{"\n"}80</div>
        <div>網路</div>
        <div>已解析的網路類{"\n"}Default</div>
      </InfoBar>
      <StatusBar>
        <StatusField $first>檔案 'C:\Users\pig70\OneDri...</StatusField>
        <StatusField>Z 9.54</StatusField>
        <StatusField>X 83.2500  Y 66.7500</StatusField>
        <StatusField>dx 83.2500  dy 66.7500  dist 106.7058</StatusField>
        <StatusField>網格 0.2500</StatusField>
        <StatusField>mm</StatusField>
        <StatusField>選擇專案</StatusField>
      </StatusBar>
    </Window>
  );
}
